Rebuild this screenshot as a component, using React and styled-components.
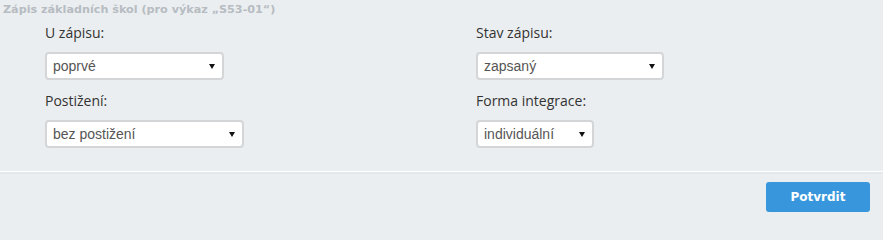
import React from 'react'
import styled, { createGlobalStyle } from 'styled-components'

const GlobalStyle = createGlobalStyle`
  html, body {
    margin: 0;
    padding: 0;
    background: #ebeef0;
  }
  * { box-sizing: border-box; }
`

const fields = [
  { label: 'U zápisu:', value: 'poprvé', width: 179 },
  { label: 'Stav zápisu:', value: 'zapsaný', width: 188 },
  { label: 'Postižení:', value: 'bez postižení', width: 199 },
  { label: 'Forma integrace:', value: 'individuální', width: 118 },
]

const SelectBox = ({ value, width }) => (
  <SelectWrap $width={width}>
    <Select defaultValue={value}>
      <option>{value}</option>
    </Select>
    <Arrow />
  </SelectWrap>
)

const App = () => {
  return (
    <Page>
      <GlobalStyle />
      <Title>Zápis základních škol (pro výkaz „S53-01“)</Title>
      <Grid>
        {fields.map((f) => (
          <Field key={f.label}>
            <Label>{f.label}</Label>
            <SelectBox value={f.value} width={f.width} />
          </Field>
        ))}
      </Grid>
      <Footer>
        <Button>Potvrdit</Button>
      </Footer>
    </Page>
  )
}

export default App

const Page = styled.div`
width: 883px;
height: 222px;
background: #ebeef0;
font-family: "Open Sans", "Liberation Sans", sans-serif;
overflow: hidden;
`;

const Title = styled.div`
padding: 2px 0 0 3px;
height: 24px;
font-family: "DejaVu Sans", Verdana, sans-serif;
font-weight: bold;
font-size: 11.2px;
line-height: 16px;
color: #b6bcc2;
`;

const Grid = styled.div`
display: grid;
grid-template-columns: 431px 431px;
row-gap: 12px;
padding-left: 45px;
`;

const Field = styled.div`
display: flex;
flex-direction: column;
align-items: flex-start;
`;

const Label = styled.div`
font-size: 14px;
line-height: 18px;
color: #333;
margin-bottom: 10px;
`;

const SelectWrap = styled.div`
position: relative;
width: ${(p) => p.$width}px;
height: 28px;
`;

const Select = styled.select`
appearance: none;
-webkit-appearance: none;
width: 100%;
height: 100%;
border: 2px solid #d3d5d7;
border-radius: 4px;
background: #fff;
padding: 0 20px 0 6px;
font-family: "Liberation Sans", Arial, sans-serif;
font-size: 14px;
color: #555;
outline: none;
`;

const Arrow = styled.span`
position: absolute;
right: 9px;
top: 12px;
width: 0;
height: 0;
border-left: 3px solid transparent;
border-right: 3px solid transparent;
border-top: 5px solid #111;
pointer-events: none;
`;

const Footer = styled.div`
margin-top: 23px;
border-top: 1px solid #fff;
box-shadow: inset 0 2px 0 #e4e8ea;
display: flex;
justify-content: flex-end;
padding: 10px 13px 0 0;
`;

const Button = styled.button`
width: 104px;
height: 30px;
border: none;
border-radius: 3px;
background: #3897dc;
color: #fff;
font-family: "DejaVu Sans", Verdana, sans-serif;
font-weight: bold;
font-size: 12px;
cursor: pointer;
`;
